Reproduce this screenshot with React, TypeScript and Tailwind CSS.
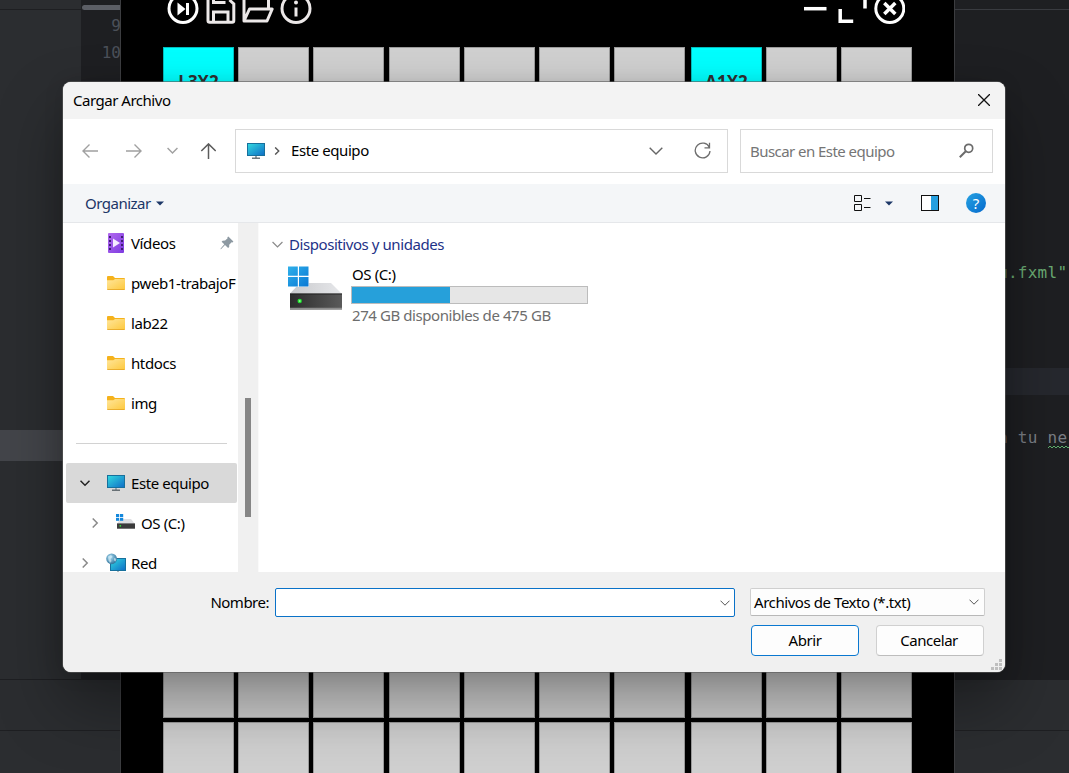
import type { ReactNode } from "react";

/* ---------- small icons ---------- */

function MonitorIcon({ w = 20 }: { w?: number }) {
  return (
    <svg width={w} height={w * 0.9} viewBox="0 0 20 18" className="shrink-0">
      <defs>
        <linearGradient id="screen" x1="0" y1="0" x2="1" y2="1">
          <stop offset="0" stopColor="#33dbe0" />
          <stop offset="1" stopColor="#0f6cc6" />
        </linearGradient>
      </defs>
      <rect x="1.5" y="1.5" width="17" height="12" fill="url(#screen)" stroke="#17709c" />
      <rect x="9" y="14" width="2" height="2" fill="#9aa5ac" />
      <rect x="6" y="15.6" width="8" height="1.2" fill="#4d565c" />
    </svg>
  );
}

function FolderIcon() {
  return (
    <svg width="18" height="16" viewBox="0 0 18 16" className="shrink-0">
      <defs>
        <linearGradient id="folder" x1="0" y1="0" x2="1" y2="1">
          <stop offset="0" stopColor="#ffe69b" />
          <stop offset="1" stopColor="#fdc83c" />
        </linearGradient>
      </defs>
      <path d="M0 2a1 1 0 0 1 1-1h5l2 2h9a1 1 0 0 1 1 1v4H0Z" fill="#f5b21c" />
      <path d="M0 5.2h6.3L8 4h9.4l.6.6V14a1 1 0 0 1-1 1H1a1 1 0 0 1-1-1Z" fill="url(#folder)" />
      <path d="M0 14.2h18a1 1 0 0 1-1 .8H1a1 1 0 0 1-1-.8Z" fill="#e3a320" />
    </svg>
  );
}

function VideoIcon() {
  return (
    <svg width="18" height="20" viewBox="0 0 18 20" className="shrink-0">
      <defs>
        <linearGradient id="video" x1="0" y1="0" x2="1" y2="1">
          <stop offset="0" stopColor="#b269ef" />
          <stop offset="1" stopColor="#7d3be0" />
        </linearGradient>
      </defs>
      <rect x="1" width="16" height="20" rx="1" fill="url(#video)" />
      {[3, 7, 11, 15].map((y) => (
        <g key={y} fill="#3f1f73">
          <rect x="2" y={y} width="2" height="2" />
          <rect x="14" y={y} width="2" height="2" />
        </g>
      ))}
      <path d="M6 5.6v9l7-4.5Z" fill="#f4edff" />
    </svg>
  );
}

function PinIcon() {
  return (
    <svg width="14" height="14" viewBox="0 0 14 14" className="shrink-0" fill="#8d99a2">
      <path d="M8.3.6 13.4 5.6 12.5 6.6 11.6 6.3 9.2 8.8 9.2 11 8.1 12 5 9 1.2 13 .4 13.2.7 12.4 4.3 8.3 1.6 5.7 2.6 4.7 5.1 4.6 7.6 2.2 7.4 1.3Z" />
    </svg>
  );
}

function SmallDriveIcon() {
  return (
    <svg width="19" height="17" viewBox="0 0 19 17" className="relative top-[-2px] shrink-0">
      <path d="M4 6h11l4 5H1Z" fill="#dedfe2" />
      <rect x="1" y="10.4" width="18" height="5.4" fill="#3b3b3b" />
      <rect x="1" y="15" width="18" height=".9" fill="#777" />
      <circle cx="4.3" cy="12.8" r=".9" fill="#2be63a" />
      <g fill="#1488dc">
        <rect x="0" y="1" width="3.2" height="3" />
        <rect x="4" y="1" width="3.2" height="3" />
        <rect x="0" y="4.8" width="3.2" height="3" />
        <rect x="4" y="4.8" width="3.2" height="3" />
      </g>
    </svg>
  );
}

function DriveIcon() {
  return (
    <svg width="56" height="44" viewBox="0 0 56 44" className="mt-[2px] shrink-0">
      <defs>
        <linearGradient id="driveTop" x1="0" y1="0" x2="1" y2="0">
          <stop offset="0" stopColor="#c9cacd" />
          <stop offset="1" stopColor="#e6e7ea" />
        </linearGradient>
        <linearGradient id="driveFront" x1="0" y1="0" x2="1" y2="0">
          <stop offset="0" stopColor="#2c2c2c" />
          <stop offset="1" stopColor="#5a5a5a" />
        </linearGradient>
        <linearGradient id="win" x1="0" y1="0" x2="1" y2="1">
          <stop offset="0" stopColor="#2fb0ea" />
          <stop offset="1" stopColor="#0a78d4" />
        </linearGradient>
      </defs>
      <path d="M12 17h31l10.500 10.500H2Z" fill="url(#driveTop)" />
      <rect x="2" y="27.500" width="52" height="16" fill="url(#driveFront)" />
      <path d="M2 28h52" stroke="#1d1d1d" strokeWidth=".8" />
      <path d="M2 42.500h52" stroke="#8d8d8d" strokeWidth="1.6" />
      <circle cx="11.700" cy="35" r="2.2" fill="#1fe02f" />
      <circle cx="11.700" cy="35" r="1" fill="#8dff8d" />
      <path d="M0 0h21v21H0Z" fill="#fff" opacity=".7" />
      <path d="M0 .500h9.8v9.3H0ZM11 .500h9.500v9.3H11ZM0 11h9.8v9.4H0ZM11 11h9.500v9.4H11Z" fill="url(#win)" />
    </svg>
  );
}

function NetworkIcon() {
  return (
    <svg width="21" height="20" viewBox="0 0 21 20" className="shrink-0">
      <defs>
        <radialGradient id="globe" cx=".4" cy=".35" r=".7">
          <stop offset="0" stopColor="#a9dcf2" />
          <stop offset="1" stopColor="#2b6e97" />
        </radialGradient>
      </defs>
      <rect x="4.5" y="5.5" width="15" height="12" fill="url(#screen)" stroke="#17709c" />
      <rect x="11.2" y="18" width="1.6" height="2" fill="#9aa5ac" />
      <circle cx="5.6" cy="5.8" r="5.4" fill="url(#globe)" />
      <path d="M2 3.4 5 2l1.6 1.8L4.4 6 5.6 8 4 10 2.6 7.4ZM8 5l2.4.8-.8 2.8L8 7.4Z" fill="#dff3fb" opacity=".6" />
    </svg>
  );
}

function Chevron({ dir = "down", size = 10, color = "#8a8a8a", width = 1.3 }: { dir?: "down" | "right"; size?: number; color?: string; width?: number }) {
  return (
    <svg width={size} height={size} viewBox="0 0 10 10" className="shrink-0" fill="none" stroke={color} strokeWidth={width}>
      <path d={dir === "down" ? "M.5 2.7 5 7.2 9.5 2.7" : "M2.7 .5 7.2 5 2.7 9.5"} />
    </svg>
  );
}

function Caret() {
  return (
    <svg width="8" height="5" viewBox="0 0 8 5" className="shrink-0">
      <path d="M0 .5h8L4 4.5Z" fill="#1c3767" />
    </svg>
  );
}

/* ---------- IDE behind everything ---------- */

function Ide() {
  return (
    <div className="flex h-full w-full justify-between bg-[#2b2d30] font-['DejaVu_Sans_Mono',monospace] text-[16px]">
      <div className="flex w-[121px] flex-col">
        <div className="flex h-[679px]">
          <div className="flex w-[81px] flex-col">
            <div className="h-[10px] border-b border-[#1e1f22]" />
            <div className="mt-[420px] h-[31px] bg-[#43454a]" />
          </div>
          <div className="flex w-10 flex-col items-end bg-[#1e1f22] text-[#4b5059]">
            <div className="mt-[5px] h-[5px] w-[39px] rounded-l bg-[#5c5f66]" />
            <div className="mt-[2px] h-[27px] leading-[27px]">9</div>
            <div className="h-[27px] leading-[27px]">10</div>
          </div>
        </div>
        <div className="h-[51px] border-t border-[#1e1f22]" />
        <div className="flex-1 border-t border-[#1e1f22]" />
      </div>
      <div className="flex w-[114px] flex-col overflow-hidden">
        <div className="flex h-[680px] flex-col bg-[#1e1f22]">
          <div className="h-[10px] border-b border-[#393b40]" />
          <div className="mt-[249px] h-[27px] pl-[43px] leading-[27px] tracking-[0.27px] whitespace-pre text-[#6aab73]">u.fxml"</div>
          <div className="mt-[82px] h-[27px] bg-[#26282e]" />
          <div className="mt-[29px] flex h-[27px] pl-[43px] leading-[27px] tracking-[0.27px] whitespace-pre text-[#7a7e85]">
            <span>n tu </span>
            <span className="flex flex-col">
              ne
              <svg width="22" height="4" viewBox="0 0 22 4" fill="none" stroke="#5fb06c" className="mt-[-6px]">
                <path d="M0 3 2 1l2 2 2-2 2 2 2-2 2 2 2-2 2 2 2-2 2 2 2-2" />
              </svg>
            </span>
          </div>
        </div>
        <div className="h-[50px]" />
        <div className="flex-1 border-t border-[#1e1f22]" />
      </div>
    </div>
  );
}

/* ---------- board window ---------- */

const cells = Array.from({ length: 100 }, (_, i) => (i === 0 ? "L3X2" : i === 7 ? "A1X2" : ""));

function BoardWindow() {
  return (
    <div className="absolute top-0 left-[120px] flex h-full w-[835px] flex-col overflow-hidden border-x border-[#3c3d40] bg-black">
      <div className="flex h-[47px] shrink-0 items-start justify-between pr-[49px] pl-[46px]">
        <svg width="148" height="26" viewBox="0 0 148 26" fill="none" stroke="#ece8e8" strokeWidth="3">
          <circle cx="16" cy="8.5" r="14" stroke="#fff" />
          <path d="M10.5 2.5v13l8-6.5Z" fill="#fff" stroke="none" />
          <path d="M20.5 3v12" stroke="#fff" />
          <path d="M41 0v20.5a1.7 1.7 0 0 0 1.7 1.7h22.4a1.7 1.7 0 0 0 1.7-1.7V4L62.500 0M46.500 22V12h14.500v10M46.500 0v2.500h12" />
          <path d="M77 21V-2h24.500V9M77 21l5.500-12h22.700L100 21Z" strokeLinejoin="round" />
          <circle cx="129" cy="8.500" r="14" />
          <path d="M129 7.500v9" />
          <circle cx="129" cy="2.500" r="2" fill="#ece8e8" stroke="none" />
        </svg>
        <svg width="104" height="26" viewBox="0 0 104 26" fill="none" stroke="#fff" strokeWidth="3.500">
          <path d="M3 8.700h22.500" />
          <path d="M39.200 9v12.200h13M64 0v8.500" />
          <circle cx="88.800" cy="8.500" r="14" strokeWidth="3" />
          <path d="m83.300 3 11 11M94.300 3 83.300 14" />
        </svg>
      </div>
      <div className="ml-[42px] grid shrink-0 grid-cols-[75px_75px_76px_75px_75px_75px_77px_75px_75px_71px] gap-y-[4.500px]">
        {cells.map((label, i) => (
          <div
            key={i}
            className={
              "flex h-[70.500px] w-[71px] items-center justify-center border border-black/25 font-['Open_Sans',sans-serif] text-[17px] leading-[22px] font-bold text-[#303030] " +
              (label ? "bg-[#00ffff]" : "bg-[#d0d0d0]")
            }
          >
            {label}
          </div>
        ))}
      </div>
    </div>
  );
}

/* ---------- file dialog ---------- */

function SideRow({ icon, label, lead, indent = false, selected = false, trail }: { icon: ReactNode; label: string; lead?: ReactNode; indent?: boolean; selected?: boolean; trail?: ReactNode }) {
  return (
    <div className={"ml-[3px] flex h-10 w-[171px] shrink-0 items-center rounded-[2px] " + (selected ? "bg-[#d9d9d9]" : "")}>
      <div className={"flex shrink-0 items-center justify-center " + (indent ? "ml-[22px] w-[14px]" : "ml-[11px] w-[15px]")}>{lead}</div>
      <div className={"flex shrink-0 justify-center " + (indent ? "ml-[13px] w-[21px]" : "ml-[13px] w-[22px]")}>{icon}</div>
      <span className={"tracking-[-0.4px] whitespace-nowrap " + (indent ? "ml-[5px]" : "ml-[4px]")}>{label}</span>
      {trail && <div className="mr-[3px] ml-auto">{trail}</div>}
    </div>
  );
}

function Sidebar() {
  return (
    <div className="flex w-[175px] flex-col overflow-hidden bg-white">
      <SideRow icon={<VideoIcon />} label="Vídeos" trail={<PinIcon />} />
      <SideRow icon={<FolderIcon />} label="pweb1-trabajoF" />
      <SideRow icon={<FolderIcon />} label="lab22" />
      <SideRow icon={<FolderIcon />} label="htdocs" />
      <SideRow icon={<FolderIcon />} label="img" />
      <div className="flex h-10 shrink-0 items-center pr-[11px] pl-[13px]">
        <div className="h-px w-full bg-[#d2d2d2]" />
      </div>
      <SideRow icon={<MonitorIcon />} label="Este equipo" selected lead={<Chevron color="#222" width={1.5} />} />
      <SideRow icon={<SmallDriveIcon />} label="OS (C:)" indent lead={<Chevron dir="right" width={1.5} />} />
      <SideRow icon={<NetworkIcon />} label="Red" lead={<Chevron dir="right" width={1.5} />} />
    </div>
  );
}

function Dialog() {
  return (
    <div className="absolute top-[82px] left-[63px] flex h-[590px] w-[942px] flex-col overflow-hidden rounded-[8px] bg-white font-['Noto_Sans',sans-serif] text-[15px] leading-5 text-black">
      {/* title bar */}
      <div className="flex h-[37px] shrink-0 items-center justify-between bg-[#f3f3f3] pr-[15px] pb-[2px] pl-[10px]">
        <span className="tracking-[-0.480px]">Cargar Archivo</span>
        <svg width="12" height="12" viewBox="0 0 12 12" stroke="#111" strokeWidth="1.300">
          <path d="m0 0 12 12M12 0 0 12" />
        </svg>
      </div>

      {/* navigation */}
      <div className="flex h-[65px] shrink-0 items-center pr-3 pb-[2px] pl-[19px]">
        <svg width="16" height="14" viewBox="0 0 16 14" fill="none" stroke="#a0a0a0" strokeWidth="1.400" className="mr-[28px] shrink-0">
          <path d="M16 7H1M7.500.500 1 7l6.500 6.500" />
        </svg>
        <svg width="16" height="14" viewBox="0 0 16 14" fill="none" stroke="#a0a0a0" strokeWidth="1.400" className="mr-[25px] shrink-0">
          <path d="M0 7h15M8.500.500 15 7l-6.500 6.500" />
        </svg>
        <Chevron size={11} color="#a0a0a0" />
        <svg width="16" height="16" viewBox="0 0 16 16" fill="none" stroke="#5c5c5c" strokeWidth="1.500" className="ml-[22px] shrink-0">
          <path d="M8.500 16V1M1.300 8 8.500.900 15.700 8" />
        </svg>
        <div className="ml-auto flex h-11 w-[493px] shrink-0 items-center border border-[#d9d9d9] pr-[16px] pl-[10px]">
          <MonitorIcon />
          <div className="mr-[10px] ml-[7px] flex">
            <Chevron dir="right" size={8} color="#555" width={1.700} />
          </div>
          <span className="pb-[2px] tracking-[-0.420px]">Este equipo</span>
          <div className="mr-[31px] ml-auto">
            <Chevron size={14} color="#666" width={1} />
          </div>
          <svg width="17" height="17" viewBox="0 0 17 17" fill="none" stroke="#6d6d6d" strokeWidth="1.300">
            <path d="M15.400 5.500A7.400 7.400 0 1 0 16 9M15.500.800v5h-5" />
          </svg>
        </div>
        <div className="ml-3 flex h-11 w-[253px] shrink-0 items-center justify-between border border-[#d9d9d9] pr-[18px] pl-[9px]">
          <span className="pt-px tracking-[-0.550px] text-[#757575]">Buscar en Este equipo</span>
          <svg width="15" height="15" viewBox="0 0 15 15" fill="none" stroke="#6b6b6b" strokeWidth="1.700">
            <circle cx="9.700" cy="5.300" r="4" />
            <path d="M6.800 8.200.800 14.200" strokeWidth="2" />
          </svg>
        </div>
      </div>

      {/* command bar */}
      <div className="flex h-[39px] shrink-0 items-center border-b border-[#e5e7ea] bg-[#f4f6f8] pr-[19px] pl-[22px]">
        <span className="mr-[5px] tracking-[-0.500px] text-[#1c3767]">Organizar</span>
        <Caret />
        <svg width="17" height="16" viewBox="0 0 17 16" fill="none" stroke="#111" className="mr-[14px] ml-auto">
          <path d="M.500.500h7v6h-7ZM.500 9.500h7v6h-7ZM10 3.500h6.500M10 12.500h6.500" />
        </svg>
        <Caret />
        <svg width="18" height="16" viewBox="0 0 18 16" className="mr-[27px] ml-[28px]">
          <rect x=".500" y=".500" width="17" height="15" fill="#fff" stroke="#111" />
          <rect x="10" y="1" width="7" height="14" fill="#26a0e0" />
        </svg>
        <div className="flex h-5 w-5 items-center justify-center rounded-full bg-linear-to-br from-[#27a3e2] to-[#0868cc] text-[15px] leading-none text-white">?</div>
      </div>

      {/* body */}
      <div className="flex h-[349px] shrink-0">
        <Sidebar />
        <div className="w-5 bg-[#f0f0f0] pt-[175px] pl-[7px]">
          <div className="h-[119px] w-[6px] bg-[#868686]" />
        </div>
        <div className="flex-1 border-l border-[#fafafa] bg-white pt-[11px] pl-[13px]">
          <div className="flex items-center">
            <Chevron size={11} width={1.100} />
            <span className="ml-[6px] tracking-[-0.430px] text-[#1e3287]">Dispositivos y unidades</span>
          </div>
          <div className="mt-[10px] ml-[16px] flex">
            <DriveIcon />
            <div className="ml-[7px]">
              <div className="h-5 pl-px tracking-[-0.400px]">OS (C:)</div>
              <div className="mt-[2px] h-[18px] w-[237px] border border-[#bcbcbc] bg-[#e6e6e6]">
                <div className="h-full w-[98px] bg-[#26a0da]" />
              </div>
              <div className="mt-px pl-px tracking-[-0.420px] text-[#6d6d6d]">274 GB disponibles de 475 GB</div>
            </div>
          </div>
        </div>
      </div>

      {/* footer */}
      <div className="relative flex-1 bg-[#f0f0f0] pt-4">
        <div className="flex items-start">
          <span className="mt-[4px] w-[206px] text-right tracking-[-0.500px]">Nombre:</span>
          <div className="ml-[6px] flex h-[29px] w-[460px] items-center justify-end rounded-[2px] border border-[#0a72c8] bg-white pr-[4px]">
            <Chevron color="#555" width={1} />
          </div>
          <div className="ml-[15px] flex h-7 w-[235px] items-center justify-between rounded-[2px] border border-[#cfcfcf] border-b-[#b8b8b8] bg-[#fdfdfd] pr-[5px] pl-[3px]">
            <span className="tracking-[-0.430px]">Archivos de Texto (*.txt)</span>
            <Chevron color="#555" width={1} />
          </div>
        </div>
        <div className="mt-2 flex justify-end gap-[17px] pr-[21px]">
          <button className="h-[31px] w-[108px] rounded-[4px] border border-[#0a78d0] bg-[#fdfdfd] pb-[2px] tracking-[-0.450px]">Abrir</button>
          <button className="h-[31px] w-[108px] rounded-[4px] border border-[#d0d0d0] border-b-[#bdbdbd] bg-[#fdfdfd] pr-[2px] pb-[2px] tracking-[-0.450px]">Cancelar</button>
        </div>
        <svg width="11" height="11" viewBox="0 0 11 11" fill="#bfbfbf" className="absolute right-[3px] bottom-[2px]">
          <path d="M8 0h3v3H8ZM4 4h3v3H4ZM8 4h3v3H8ZM0 8h3v3H0ZM4 8h3v3H4ZM8 8h3v3H8Z" />
        </svg>
      </div>
    </div>
  );
}

export default function App() {
  return (
    <div className="relative h-[773px] w-[1069px] overflow-hidden">
      <Ide />
      <BoardWindow />
      <div className="absolute top-[82px] left-[63px] h-[590px] w-[942px] rounded-[8px] [box-shadow:0_0_0_1px_rgba(90,90,90,0.6),0_32px_64px_rgba(0,0,0,0.36),0_2px_20px_rgba(0,0,0,0.12)]" />
      <Dialog />
    </div>
  );
}
